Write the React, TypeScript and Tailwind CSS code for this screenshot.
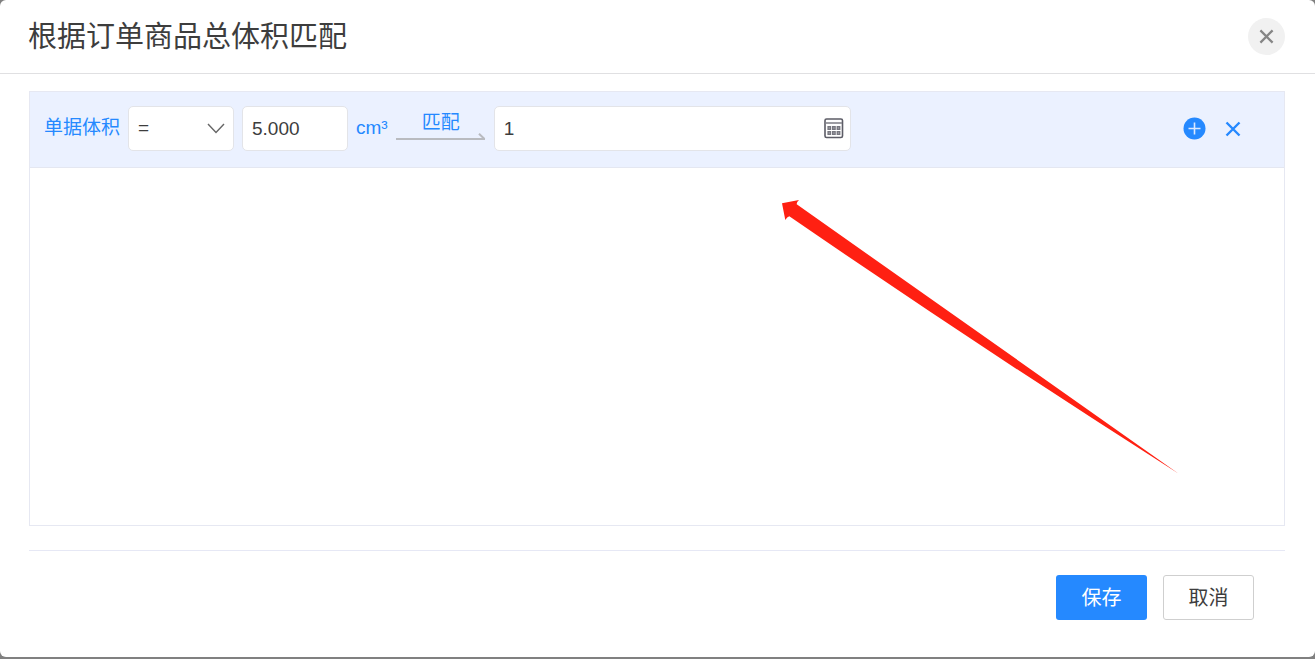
import React, { useState } from "react"

const operators = ["=", ">", "<", "≥", "≤"]

function CrossIcon({ className }: { className?: string }) {
  return (
    <svg viewBox="0 0 16 16" className={className} fill="none" stroke="currentColor" aria-hidden="true">
      <path d="M1.5 1.5 14.5 14.5M14.5 1.5 1.5 14.5" strokeWidth="2.4" />
    </svg>
  )
}

function KeypadIcon() {
  return (
    <svg width="20" height="21" viewBox="0 0 20 21" fill="none" stroke="#5c5c66" className="block" aria-hidden="true">
      <rect x="1" y="1" width="17.5" height="18.5" rx="1.6" strokeWidth="1.6" />
      <path d="M1.5 5H18" strokeWidth="1.6" stroke="#85858d" />
      <path d="M3.4 10H7.2M8 10H11.8M12.6 10H16.4M3.4 15H7.2M8 15H11.8M12.6 15H16.4" strokeWidth="3.8" stroke="#77777f" />
      <path d="M4.7 10H5.9M9.3 10H10.5M13.9 10H15.1M4.7 15H5.9M9.3 15H10.5M13.9 15H15.1" strokeWidth="1.2" stroke="#b4b4ba" />
    </svg>
  )
}

function Connector({ label }: { label: string }) {
  return (
    <div className="w-[90px] shrink-0 pb-1 text-center text-[#2589ff]">
      <div className="leading-5">{label}</div>
      <svg width="90" height="7" viewBox="0 0 90 7" fill="none" stroke="#b9bbc0" className="block" aria-hidden="true">
        <path d="M0 6H89" strokeWidth="2" />
        <path d="M83 0.8 88.5 6" strokeWidth="2" />
      </svg>
    </div>
  )
}

function Pointer() {
  return (
    <svg width="398" height="275" viewBox="0 0 398 275" className="pointer-events-none absolute top-[108px] right-[104px]" aria-hidden="true">
      <path d="M0 3.3 17 0Q14.5 2 14.7 4.3L396.7 273.7Q202 150 7.3 16.3Q5 17 3.3 20Z" fill="#ff2012" />
    </svg>
  )
}

export default function App() {
  const [operator, setOperator] = useState("=")
  const [volume, setVolume] = useState("5.000")
  const [result, setResult] = useState("1")

  const field = "h-[45px] rounded-[5px] border border-[#e3e4e8] bg-white px-[9px] text-[19px] text-[#3d3d3d] outline-none"

  return (
    <div className="flex min-h-screen flex-col bg-[#808080] pb-0.5 font-['Liberation_Sans','Noto_Sans_CJK_SC',sans-serif]">
      <div role="dialog" aria-labelledby="dialog-title" className="flex flex-1 flex-col rounded-md bg-white">
        <header className="flex h-[74px] items-center justify-between border-b border-[#e0e0e2] pr-[30px] pl-7">
          <h1 id="dialog-title" className="text-[29px] leading-9 text-[#3d3d3d]">根据订单商品总体积匹配</h1>
          <button aria-label="关闭" className="flex size-[37px] items-center justify-center rounded-full bg-[#f1f1f1] text-[#858585]">
            <CrossIcon className="size-[15px]" />
          </button>
        </header>

        <main className="flex flex-1 flex-col pt-[17px] pr-[30px] pl-[29px]">
          <section className="relative flex-1 border border-[#e6e8f2]">
            <div className="flex items-center gap-2 border-b border-[#e4e7f1] bg-[#ebf1ff] pt-[14px] pr-[43px] pb-4 pl-[14px] text-[19px]">
              <label htmlFor="operator" className="shrink-0 text-[#2589ff]">单据体积</label>
              <div className="relative shrink-0">
                <select id="operator" value={operator} onChange={e => setOperator(e.target.value)} className={`${field} block w-[106px] appearance-none`}>
                  {operators.map(o => <option key={o}>{o}</option>)}
                </select>
                <svg width="18" height="11" viewBox="0 0 18 11" fill="none" stroke="#666" strokeWidth="1.4" className="pointer-events-none absolute top-[17px] right-[9px]" aria-hidden="true">
                  <path d="M1 1 9 9.5 17 1" />
                </svg>
              </div>
              <input id="volume" aria-label="体积" value={volume} onChange={e => setVolume(e.target.value)} className={`${field} w-[106px] shrink-0`} />
              <label htmlFor="volume" className="shrink-0 text-[#2589ff]">cm³</label>
              <Connector label="匹配" />
              <div className="relative w-[357px]">
                <input aria-label="匹配" value={result} onChange={e => setResult(e.target.value)} className={`${field} block w-full pr-9`} />
                <button aria-label="编辑公式" className="absolute top-3 right-[7px]">
                  <KeypadIcon />
                </button>
              </div>
              <div className="ml-auto flex items-center gap-[19px] text-[#2589ff]">
                <button aria-label="添加">
                  <svg width="23" height="23" viewBox="0 0 23 23" className="block" aria-hidden="true">
                    <circle cx="11.5" cy="11.5" r="11" fill="currentColor" />
                    <path d="M5.5 11.5H17.5M11.5 5.5V17.5" stroke="#dce9ff" strokeWidth="1.6" />
                  </svg>
                </button>
                <button aria-label="删除">
                  <CrossIcon className="block size-4" />
                </button>
              </div>
            </div>
            <Pointer />
          </section>

          <footer className="mt-6 flex justify-end gap-4 border-t border-[#e6e8f5] pt-6 pr-[31px] pb-[37px] text-xl">
            <button className="h-[45px] w-[91px] rounded-[3px] bg-[#2589ff] text-white">保存</button>
            <button className="h-[45px] w-[91px] rounded-[3px] border border-[#cfcfcf] bg-white text-[#3d3d3d]">取消</button>
          </footer>
        </main>
      </div>
    </div>
  )
}
